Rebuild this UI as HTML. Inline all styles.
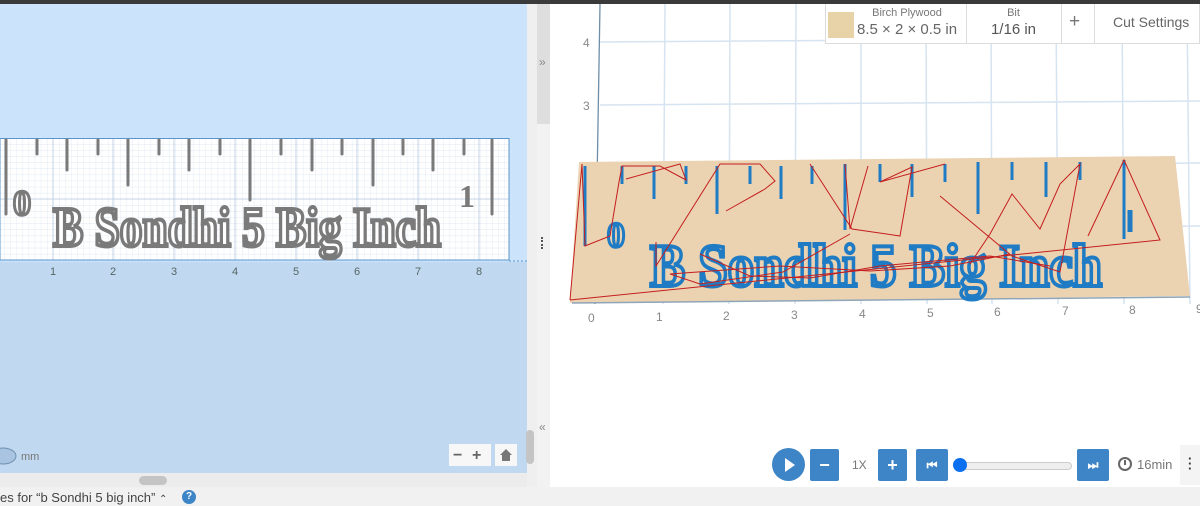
<!DOCTYPE html>
<html><head><meta charset="utf-8"><style>
*{margin:0;padding:0;box-sizing:border-box}
body{width:1200px;height:506px;overflow:hidden;position:relative;background:#fff;font-family:"Liberation Sans",sans-serif}
.abs{position:absolute}
.btn{position:absolute;background:#3d85c6;color:#fff;display:flex;align-items:center;justify-content:center;font-weight:bold;border-radius:2px}
</style></head><body>
<div class="abs" style="left:0;top:0;width:1200px;height:4px;background:#3a3a3a"></div>
<div class="abs" style="left:0;top:4px;width:527px;height:258px;background:#cbe4fb"></div>
<div class="abs" style="left:0;top:262px;width:527px;height:211px;background:#c1d9f0"></div>
<div class="abs" style="left:0;top:473px;width:527px;height:14px;background:#ececec"></div>
<div class="abs" style="left:139px;top:476px;width:28px;height:9px;background:#c4c4c4;border-radius:5px"></div>
<div class="abs" style="left:527px;top:4px;width:10px;height:483px;background:#efefef"></div>
<div class="abs" style="left:526px;top:430px;width:8px;height:34px;background:#c4c4c4;border-radius:4px"></div>
<div class="abs" style="left:537px;top:4px;width:13px;height:120px;background:#dedede"></div>
<div class="abs" style="left:537px;top:124px;width:13px;height:363px;background:#f2f2f2"></div>
<div class="abs" style="left:539px;top:55px;font-size:12px;color:#888">»</div>
<div class="abs" style="left:539px;top:420px;font-size:12px;color:#888">«</div>
<div class="abs" style="left:541px;top:237px;width:3px;height:12px;border-left:2px dotted #555"></div>
<svg class="abs" style="left:0;top:0" width="527" height="473">
<defs><pattern id="g" x="-8" y="138" width="6.1" height="6.1" patternUnits="userSpaceOnUse"><path d="M0 0H6.1M0 0V6.1" stroke="#d4dfec" stroke-width="0.6" fill="none"/></pattern></defs>
<rect x="0" y="138" width="509" height="122" fill="#fff"/>
<rect x="0" y="138" width="509" height="122" fill="url(#g)"/>
<g stroke="#b7c9df" stroke-width="0.8">
<line x1="53" y1="138" x2="53" y2="260"/><line x1="113" y1="138" x2="113" y2="260"/><line x1="174" y1="138" x2="174" y2="260"/><line x1="235" y1="138" x2="235" y2="260"/><line x1="296" y1="138" x2="296" y2="260"/><line x1="357" y1="138" x2="357" y2="260"/><line x1="418" y1="138" x2="418" y2="260"/><line x1="479" y1="138" x2="479" y2="260"/>
<line x1="0" y1="199" x2="509" y2="199"/>
</g>
<rect x="0" y="138.5" width="509" height="121.5" fill="none" stroke="#5b95cc" stroke-width="1"/>
<line x1="509" y1="261" x2="527" y2="261" stroke="#5b95cc" stroke-dasharray="2 2"/>
<g stroke="#7a7a7a" stroke-width="3" stroke-linecap="round">
<line x1="6" y1="140" x2="6" y2="214"/>
<line x1="37" y1="140" x2="37" y2="154"/><line x1="67" y1="140" x2="67" y2="170"/><line x1="98" y1="140" x2="98" y2="154"/>
<line x1="128" y1="140" x2="128" y2="185"/>
<line x1="159" y1="140" x2="159" y2="154"/><line x1="189" y1="140" x2="189" y2="170"/><line x1="220" y1="140" x2="220" y2="154"/>
<line x1="250" y1="140" x2="250" y2="200"/>
<line x1="281" y1="140" x2="281" y2="154"/><line x1="312" y1="140" x2="312" y2="170"/><line x1="342" y1="140" x2="342" y2="154"/>
<line x1="373" y1="140" x2="373" y2="185"/>
<line x1="403" y1="140" x2="403" y2="154"/><line x1="433" y1="140" x2="433" y2="170"/><line x1="464" y1="140" x2="464" y2="154"/>
<line x1="492" y1="140" x2="492" y2="214"/>
</g>
<text x="13" y="215" font-family="Liberation Serif" font-weight="bold" font-size="36" fill="#fff" stroke="#7a7a7a" stroke-width="3">0</text>
<text x="459" y="207" font-family="Liberation Serif" font-weight="bold" font-size="32" fill="#7a7a7a">1</text>
<text x="53" y="246" textLength="388" lengthAdjust="spacingAndGlyphs" font-family="Liberation Serif" font-weight="bold" font-size="56" fill="#fff" stroke="#7a7a7a" stroke-width="4">B Sondhi 5 Big Inch</text>
<g font-size="11" fill="#566" text-anchor="middle">
<text x="53" y="275">1</text><text x="113" y="275">2</text><text x="174" y="275">3</text><text x="235" y="275">4</text><text x="296" y="275">5</text><text x="357" y="275">6</text><text x="418" y="275">7</text><text x="479" y="275">8</text>
</g>
<ellipse cx="3" cy="456" rx="13" ry="8" fill="#a8c4e0" stroke="#6f8fb0"/>
<text x="21" y="460" font-size="11" fill="#777">mm</text>
<rect x="449" y="444" width="42" height="22" fill="#f7f7f7"/>
<rect x="495" y="444" width="22" height="22" fill="#f7f7f7"/>
<text x="453" y="460" font-size="16" font-weight="bold" fill="#666">−</text>
<text x="472" y="460" font-size="16" font-weight="bold" fill="#666">+</text>
<path d="M506 449 L500 455 H502 V461 H510 V455 H512 Z" fill="#777"/>
</svg>
<svg class="abs" style="left:550px;top:4px" width="650" height="483">
<g stroke="#d6e3f0" stroke-width="1.5">
<line x1="115" y1="0" x2="113" y2="300"/><line x1="180" y1="0" x2="179" y2="300"/><line x1="246" y1="0" x2="245" y2="300"/><line x1="311" y1="0" x2="311" y2="300"/><line x1="376" y1="0" x2="377" y2="300"/><line x1="441" y1="0" x2="442" y2="300"/><line x1="506" y1="0" x2="508" y2="300"/><line x1="572" y1="0" x2="574" y2="300"/><line x1="637" y1="0" x2="640" y2="300"/>
<line x1="50" y1="38" x2="650" y2="34"/><line x1="50" y1="101" x2="650" y2="97"/><line x1="50" y1="164" x2="650" y2="159"/><line x1="50" y1="228" x2="650" y2="222"/>
</g>
<line x1="50" y1="0" x2="45" y2="300" stroke="#6e8ea8" stroke-width="1.3"/>
<text x="33" y="43" font-size="12" fill="#888">4</text>
<text x="33" y="106" font-size="12" fill="#888">3</text>
<polygon points="29,158 625,152 640,292 20,299" fill="#ebd3b2"/>
<line x1="22" y1="299" x2="640" y2="293" stroke="#8fa5b8" stroke-width="1.5"/>
<g stroke="#1e7bc4" stroke-width="3" fill="none">
<line x1="35" y1="162" x2="35" y2="242"/><line x1="72" y1="162" x2="72" y2="180"/><line x1="104" y1="162" x2="104" y2="195"/><line x1="136" y1="162" x2="136" y2="180"/><line x1="167" y1="162" x2="167" y2="210"/><line x1="200" y1="162" x2="200" y2="180"/><line x1="231" y1="162" x2="231" y2="195"/><line x1="262" y1="162" x2="262" y2="180"/><line x1="295" y1="160" x2="295" y2="226"/><line x1="330" y1="160" x2="330" y2="178"/><line x1="362" y1="160" x2="362" y2="193"/><line x1="395" y1="160" x2="395" y2="178"/><line x1="428" y1="158" x2="428" y2="210"/><line x1="462" y1="158" x2="462" y2="176"/><line x1="496" y1="158" x2="496" y2="193"/><line x1="530" y1="158" x2="530" y2="176"/><line x1="574" y1="156" x2="574" y2="235"/>
<line x1="580" y1="206" x2="580" y2="228" stroke-width="5"/>
</g>
<text x="57" y="243" font-family="Liberation Serif" font-weight="bold" font-size="36" fill="none" stroke="#1e7bc4" stroke-width="3">0</text>
<text x="100" y="282" textLength="452" lengthAdjust="spacingAndGlyphs" font-family="Liberation Serif" font-weight="bold" font-size="60" fill="#ebd3b2" stroke="#1e7bc4" stroke-width="4">B Sondhi 5 Big Inch</text>
<g stroke="#c41e1e" stroke-width="1" fill="none">
<polyline points="20,296 32,160 35,242 60,232 69,178 72,162 110,162 136,176 130,160 76,175"/>
<polyline points="20,296 610,236 574,156 538,232"/>
<polyline points="106,238 106,262 170,160 210,160 225,177 215,185 176,207"/>
<polyline points="260,160 302,225 350,232 362,163 330,178 395,160"/>
<polyline points="390,192 462,252 510,268 530,160 510,180 490,225 462,190 440,230 420,260"/>
<polyline points="300,230 233,268 150,280 120,270 230,262 320,267 400,262 460,250"/>
<polyline points="150,250 200,272 260,274 330,262 440,252 500,262"/>
<polyline points="295,160 300,225 318,162"/>
</g>
<g font-size="12" fill="#888">
<text x="38" y="318">0</text><text x="106" y="317">1</text><text x="173" y="316">2</text><text x="241" y="315">3</text><text x="309" y="314">4</text><text x="377" y="313">5</text><text x="444" y="312">6</text><text x="512" y="311">7</text><text x="579" y="310">8</text><text x="646" y="309">9</text>
</g>
</svg>
<div class="abs" style="left:825px;top:4px;width:375px;height:40px;background:#fff;border:1px solid #dcdcdc;border-top:none"></div>
<div class="abs" style="left:828px;top:12px;width:26px;height:26px;background:#e8d3a9"></div>
<div class="abs" style="left:858px;top:7px;width:98px;text-align:center;font-size:11px;color:#777">Birch Plywood</div>
<div class="abs" style="left:857px;top:21px;font-size:15px;color:#666">8.5 × 2 × 0.5 in</div>
<div class="abs" style="left:966px;top:4px;width:1px;height:40px;background:#dcdcdc"></div>
<div class="abs" style="left:967px;top:7px;width:93px;text-align:center;font-size:11px;color:#777">Bit</div>
<div class="abs" style="left:967px;top:21px;width:93px;text-align:center;font-size:15px;color:#555">1/16 in</div>
<div class="abs" style="left:1061px;top:4px;width:1px;height:40px;background:#dcdcdc"></div>
<div class="abs" style="left:1069px;top:11px;font-size:19px;color:#777">+</div>
<div class="abs" style="left:1094px;top:4px;width:1px;height:40px;background:#dcdcdc"></div>
<div class="abs" style="left:1113px;top:14px;font-size:14px;color:#666">Cut Settings</div>
<div class="abs" style="left:772px;top:448px;width:33px;height:33px;border-radius:50%;background:#3d85c6"></div>
<div class="abs" style="left:785px;top:458px;width:0;height:0;border-left:10px solid #fff;border-top:7px solid transparent;border-bottom:7px solid transparent"></div>
<div class="btn" style="left:810px;top:449px;width:29px;height:32px;font-size:18px">−</div>
<div class="abs" style="left:852px;top:458px;font-size:12px;color:#777">1X</div>
<div class="btn" style="left:878px;top:449px;width:29px;height:32px;font-size:18px">+</div>
<div class="btn" style="left:916px;top:449px;width:32px;height:32px;font-size:12px">⏮</div>
<div class="abs" style="left:958px;top:462px;width:114px;height:8px;border-radius:4px;background:#eee;border:1px solid #ccc"></div>
<div class="abs" style="left:953px;top:458px;width:14px;height:14px;border-radius:50%;background:#0b6ff0"></div>
<div class="btn" style="left:1077px;top:449px;width:32px;height:32px;font-size:12px">⏭</div>
<div class="abs" style="left:1118px;top:457px;width:14px;height:14px;border-radius:50%;border:2px solid #666"></div>
<div class="abs" style="left:1124px;top:460px;width:2px;height:5px;background:#666"></div>
<div class="abs" style="left:1137px;top:457px;font-size:13px;color:#777">16min</div>
<div class="abs" style="left:1180px;top:445px;width:20px;height:40px;background:#f4f4f4"></div>
<div class="abs" style="left:1188px;top:456px;font-size:13px;font-weight:bold;color:#333;line-height:5px">·<br>·<br>·</div>
<div class="abs" style="left:0;top:487px;width:1200px;height:19px;background:#f1f1f1"></div>
<div class="abs" style="left:0;top:490px;font-size:13px;color:#444;white-space:nowrap">es for “b Sondhi 5 big inch” <span style="font-size:10px">⌃</span></div>
<div class="abs" style="left:182px;top:490px;width:14px;height:14px;border-radius:50%;background:#3d85c6;color:#fff;font-size:10px;font-weight:bold;text-align:center;line-height:14px">?</div>
</body></html>
